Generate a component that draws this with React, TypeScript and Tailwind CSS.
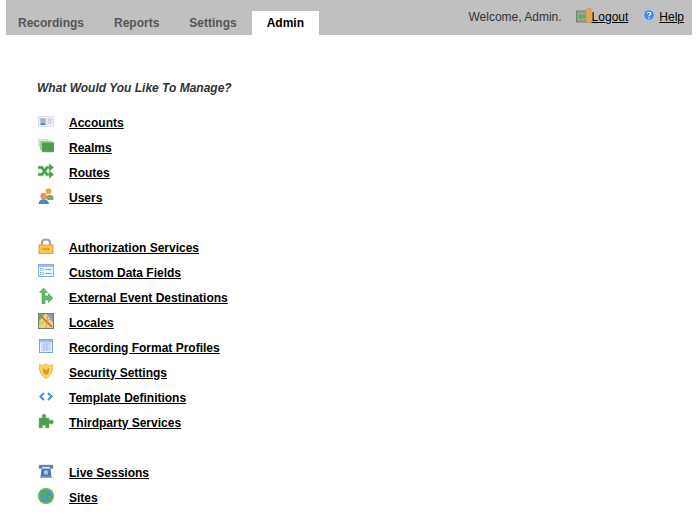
import type { ReactNode } from "react";

// 16px application icons, drawn by hand
function Icon({ children }: { children: ReactNode }) {
  return (
    <svg viewBox="0 0 16 16" className="w-4 h-4 shrink-0">
      {children}
    </svg>
  );
}

const icons: Record<string, ReactNode> = {
  accounts: (
    <Icon>
      <rect x="0.500" y="3.500" width="15" height="10" fill="#eef2f8" stroke="#d3dae4" strokeWidth="0.8" />
      <rect x="2" y="5" width="6" height="7" fill="#a9c5ec" />
      <circle cx="5" cy="7.300" r="1.700" fill="#e8a062" />
      <path d="M2.500 12c.3-2.600 4.700-2.600 5 0z" fill="#4c7fd0" />
      <path d="M9.500 6h4.500M9.500 8h4.500M9.500 10h4.500" stroke="#b3bcc9" strokeWidth="0.9" />
    </Icon>
  ),
  realms: (
    <Icon>
      <rect x="0" y="1" width="11" height="8" fill="#d3e8cc" />
      <rect x="2" y="3" width="12" height="9" fill="#a4d198" />
      <rect x="4" y="4.500" width="12" height="9.500" fill="#4f9a50" stroke="#86bb80" strokeWidth="0.6" />
    </Icon>
  ),
  routes: (
    <Icon>
      <path d="M0 4.500h4l5 7h3M0 11.500h4l5-7h3" fill="none" stroke="#a5d09d" strokeWidth="3.400" />
      <path d="M0 4.500h4l5 7h3M0 11.500h4l5-7h3" fill="none" stroke="#4b9a4e" strokeWidth="2.200" />
      <path d="M11 0.500l5 4-5 4zM11 7.500l5 4-5 4z" fill="#4b9a4e" stroke="#a5d09d" strokeWidth="0.5" />
    </Icon>
  ),
  users: (
    <Icon>
      <circle cx="10.500" cy="3.300" r="3" fill="#eea93f" />
      <path d="M7 10c.5-3.500 6.500-4 8.500-1.500V12H10z" fill="#72ab5e" />
      <circle cx="5.500" cy="8" r="3.200" fill="#e5945a" />
      <path d="M0.500 16c0-6.500 10-6.500 10.500 0z" fill="#4a85d3" />
    </Icon>
  ),
  auth: (
    <Icon>
      <path d="M4 8V4.500C4 .5 12 .5 12 4.500V8" fill="none" stroke="#a3a3a0" strokeWidth="2.200" />
      <rect x="1" y="7" width="14" height="8.500" fill="#f6c64e" stroke="#e09a2a" strokeWidth="0.9" />
      <path d="M4.500 11h7" stroke="#b87f1e" strokeWidth="1.300" strokeDasharray="1.500 1" />
    </Icon>
  ),
  fields: (
    <Icon>
      <rect x="0.500" y="1.500" width="15" height="12" fill="#eef4fc" stroke="#8dafe0" />
      <rect x="1" y="2" width="14" height="2" fill="#9dbdea" />
      <rect x="2.500" y="5.500" width="3" height="2" fill="#fff" stroke="#7b9fd6" strokeWidth="0.6" />
      <rect x="2.500" y="9.500" width="3" height="2" fill="#fff" stroke="#7b9fd6" strokeWidth="0.6" />
      <path d="M7.500 6.500h6M7.500 10.500h6" stroke="#7b9fd6" />
    </Icon>
  ),
  external: (
    <Icon>
      <path
        d="M4 16V4.500H1.500L5.500 0l4 4.500H7V8h3.500V5.500L15 10l-4.500 4.500V12H7v4z"
        fill="#62bb6b"
        stroke="#3f9a4c"
        strokeWidth="0.5"
      />
    </Icon>
  ),
  locales: (
    <Icon>
      <rect x="0.500" y="0.500" width="15" height="15" fill="#e9d67a" stroke="#6f7f70" />
      <path d="M1 1h6l-6 8z" fill="#76b66b" />
      <path d="M15 1v9l-6-9z" fill="#7c9bd8" />
      <path d="M2 2l12 12" stroke="#d8574a" strokeWidth="1.500" />
      <path d="M10 1l-2 14M1 11l14-6" stroke="#c99a45" strokeWidth="0.8" />
    </Icon>
  ),
  profiles: (
    <Icon>
      <rect x="1.500" y="1.500" width="13" height="13" fill="#e9f0fb" stroke="#7fa3da" />
      <rect x="2" y="2" width="12" height="2.500" fill="#9dbdea" />
      <path
        d="M3 6h10M3 8h10M3 10h10M3 12h10M6 5v8M9 5v8"
        stroke="#9db8e0"
        strokeWidth="0.8"
      />
    </Icon>
  ),
  security: (
    <Icon>
      <path
        d="M1.500 1.500C3.500 2.500 6 2.500 8 1c2 1.500 4.500 1.500 6.500.5C15 8 13 13 8 15.500 3 13 1 8 1.500 1.500z"
        fill="#f7d65f"
        stroke="#e2b23e"
        strokeWidth="0.8"
      />
      <path d="M5 4.500v5l3 3 3-3v-5L8 7.500z" fill="#d99a2b" />
    </Icon>
  ),
  template: (
    <Icon>
      <path d="M6 5L2.500 8.500 6 12M10 5l3.500 3.500L10 12" fill="none" stroke="#4f92e3" strokeWidth="2.200" />
    </Icon>
  ),
  thirdparty: (
    <Icon>
      <path
        d="M1 5h3.500C3.500 2.500 4.500 1 6 1s2.500 1.500 1.500 4H11v2.500c2-1 4.500-.5 4.500 1.500S13 11.500 11 10.500V15H7.500c.8-2-.2-3-1.500-3s-2.300 1-1.500 3H1z"
        fill="#4f9d50"
        stroke="#76b86f"
        strokeWidth="0.5"
      />
    </Icon>
  ),
  live: (
    <Icon>
      <path d="M1 2h14v3.500h-3V4H4v1.500H1z" fill="#5279b5" stroke="#8aa6d0" strokeWidth="0.5" />
      <path d="M3.500 5.500h9l1 9.500h-11z" fill="#4f76b4" />
      <circle cx="8" cy="9.500" r="2.200" fill="#b4c8e6" />
      <rect x="2.500" y="13.500" width="11" height="1.500" fill="#88a5d2" />
    </Icon>
  ),
  sites: (
    <Icon>
      <circle cx="8" cy="8" r="8" fill="#5fb15a" />
      <circle cx="8" cy="8" r="5.800" fill="#4a94cf" />
      <path d="M4 5c2-2 4-1 5 0s-1 3-2 3 0 3-1 4c-2-1-3-5-2-7zM10 8c1.500-1 2.500 0 3 1-.5 2-1.500 3-2.500 3z" fill="#5aa95c" />
    </Icon>
  ),
};

const groups = [
  [
    ["accounts", "Accounts"],
    ["realms", "Realms"],
    ["routes", "Routes"],
    ["users", "Users"],
  ],
  [
    ["auth", "Authorization Services"],
    ["fields", "Custom Data Fields"],
    ["external", "External Event Destinations"],
    ["locales", "Locales"],
    ["profiles", "Recording Format Profiles"],
    ["security", "Security Settings"],
    ["template", "Template Definitions"],
    ["thirdparty", "Thirdparty Services"],
  ],
  [
    ["live", "Live Sessions"],
    ["sites", "Sites"],
  ],
];

export default function App() {
  return (
    <div className="min-h-screen bg-white overflow-hidden font-['Liberation_Sans',Arial,sans-serif] text-[12px] text-black">
      {/* Top bar */}
      <div className="ml-[6px] mr-[5px] h-[35px] bg-[#c0c0c0] flex items-end justify-between">
        <div className="flex -ml-[3px] font-bold text-[#555555]">
          <a className="h-[24px] px-[15px] flex items-center">Recordings</a>
          <a className="h-[24px] px-[15px] flex items-center">Reports</a>
          <a className="h-[24px] px-[15px] flex items-center">Settings</a>
          <a className="h-[24px] px-[15px] flex items-center bg-white text-black">Admin</a>
        </div>
        <div className="flex items-center self-start h-[33px] pr-[8px] text-[#333333]">
          <span className="mr-[14px]">Welcome, Admin.</span>
          <svg viewBox="0 0 16 16" className="w-4 h-4 shrink-0 mb-[2px]">
            <rect x="0.500" y="3" width="11" height="11" fill="#9aa393" stroke="#5f6d57" strokeWidth="0.7" />
            <path d="M10 1.500l5-1.500v15l-5-1z" fill="#dba85d" stroke="#b8843d" strokeWidth="0.5" />
            <path d="M1.500 8.500L5 5.500v1.500h4v3H5v1.500z" fill="#57b04d" />
          </svg>
          <a className="underline text-black">Logout</a>
          <svg viewBox="0 0 14 14" className="w-[14px] h-[14px] ml-[14px] mr-[3px] shrink-0 mb-[3px]">
            <circle cx="7" cy="7" r="6.500" fill="#a9c6ec" />
            <circle cx="7" cy="7" r="4.800" fill="#4f86d2" />
            <path d="M5.300 5.500C5.500 3.800 8.800 3.800 8.800 5.600 8.800 6.800 7 6.800 7 8.200" fill="none" stroke="#fff" strokeWidth="1.200" />
            <circle cx="7" cy="10" r="0.800" fill="#fff" />
          </svg>
          <a className="underline text-black">Help</a>
        </div>
      </div>

      {/* Management links */}
      <div className="pl-[37px] pt-[40px]">
        <p className="h-[25px] flex items-center font-bold italic text-[#333333] mb-[10px]">What Would You Like To Manage?</p>
        <div className="flex flex-col gap-[25px]">
          {groups.map((group, i) => (
            <ul key={i}>
              {group.map(([icon, label]) => (
                <li key={label} className="h-[25px] flex items-center">
                  <span className="w-[32px] pl-px mb-[4px]">{icons[icon]}</span>
                  <a className="font-bold underline">{label}</a>
                </li>
              ))}
            </ul>
          ))}
        </div>
      </div>
    </div>
  );
}
